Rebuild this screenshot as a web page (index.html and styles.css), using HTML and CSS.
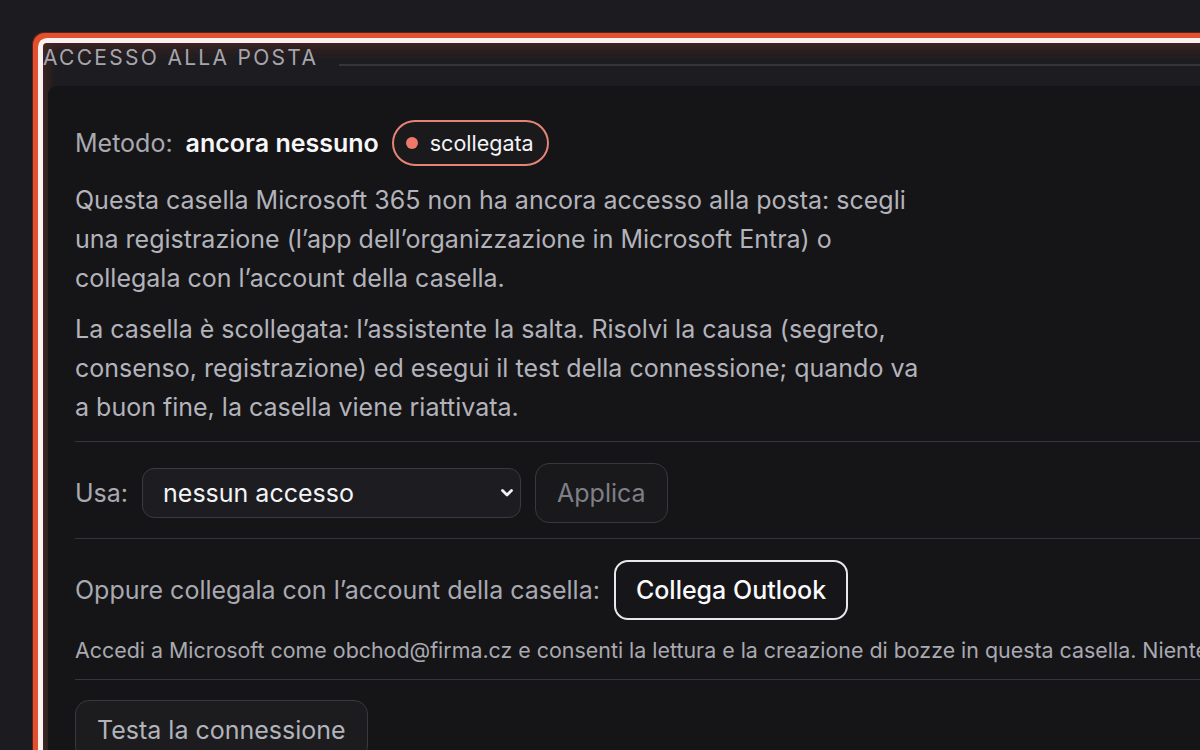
FILE: index.html
```html
<!DOCTYPE html>
<html lang="it">
<head>
	<meta charset="utf-8">
	<meta name="viewport" content="width=device-width, initial-scale=1">
	<title>Accesso alla posta</title>
	<link rel="stylesheet" href="styles.css">
</head>
<body>
	<div class="page">
		<section class="frame">
			<div class="frame-head"><span class="legend">Accesso alla posta</span></div>
			<div class="panel">
				<div class="method">
					<span class="muted">Metodo:</span>
					<strong>ancora nessuno</strong>
					<span class="badge"><i class="dot"></i>scollegata</span>
				</div>
				<p class="text">Questa casella Microsoft 365 non ha ancora accesso alla posta: scegli una registrazione (l’app dell’organizzazione in Microsoft Entra) o collegala con l’account della casella.</p>
				<p class="text">La casella è scollegata: l’assistente la salta. Risolvi la causa (segreto, consenso, registrazione) ed esegui il test della connessione; quando va a buon fine, la casella viene riattivata.</p>

				<div class="section">
					<div class="row">
						<label class="muted" for="use">Usa:</label>
						<span class="select-wrap">
							<select id="use" class="select">
								<option>nessun accesso</option>
								<option>registrazione dell’organizzazione</option>
							</select>
							<svg class="chevron" width="14" height="10" viewBox="0 0 14 10"><path d="M2.5 2.5l4.5 4.5 4.5-4.5" fill="none" stroke="#f2f2f4" stroke-width="2.8" stroke-linecap="round" stroke-linejoin="round"/></svg>
						</span>
						<button class="btn btn-disabled" disabled>Applica</button>
					</div>
				</div>

				<div class="section">
					<div class="row">
						<span class="muted">Oppure collegala con l’account della casella:</span>
						<button class="btn btn-primary">Collega Outlook</button>
					</div>
					<p class="note">Accedi a Microsoft come obchod@firma.cz e consenti la lettura e la creazione di bozze in questa casella. Niente viene inviato senza la tua conferma.</p>
				</div>

				<div class="section">
					<button class="btn btn-ghost">Testa la connessione</button>
				</div>
			</div>
		</section>
	</div>
</body>
</html>
```

FILE: styles.css
```css
html,body{margin:0;padding:0;}
body{background:#1c1c20;color:#f2f2f4;font-family:Inter,"Noto Sans",sans-serif;overflow:hidden;height:100vh;}

.page{padding:43px 0 0 43px;}

.frame{width:1500px;border-radius:4px;background:#1d1d21;box-shadow:0 0 0 5px #fbf1ef,0 0 0 10px #e2502f,0 0 0 11px #5a2418,inset 0 8px 14px rgb(226 80 47/.14),inset 6px 0 10px rgb(226 80 47/.12);}
.frame-head{display:flex;align-items:center;gap:21px;height:30px;}
.frame-head::after{content:"";flex:1;height:2px;background:#34343a;margin-top:13px;}
.legend{font-size:21px;letter-spacing:2.3px;text-transform:uppercase;color:#a6a6ae;line-height:30px;}

.panel{margin:13px 0 0 5px;background:#151517;border-radius:9px 0 0 0;padding:34px 27px 40px;font-size:25px;}

.muted{color:#a9a9b1;}
.method{display:flex;align-items:center;gap:13px;height:46px;}
.method strong{font-weight:600;color:#f7f7f9;}
.badge{display:inline-flex;align-items:center;gap:12px;height:46px;box-sizing:border-box;padding:0 13px 0 12px;border:2px solid #e58476;border-radius:23px;font-size:21.5px;color:#f4f4f6;background:#1a1a1d;}
.dot{width:12px;height:12px;border-radius:50%;background:#f0786a;}

.text{margin:15px 0 0;max-width:845px;line-height:39px;color:#b3b3bb;}
.text+.text{margin-top:12px;}

.section{margin-top:14px;border-top:1px solid #34343a;padding-top:20px;}
.row{display:flex;align-items:center;gap:14px;min-height:62px;}
.row+.note{margin-top:14px;}

.select-wrap{position:relative;display:inline-block;}
.select{appearance:none;-webkit-appearance:none;display:block;width:379px;height:50px;border-radius:12px;border:1px solid #3a3a40;background:#1d1d21;color:#f4f4f6;font:inherit;padding:0 40px 0 20px;outline:none;}
.chevron{position:absolute;right:7px;top:20px;pointer-events:none;}

.btn{font:inherit;height:60px;padding:0 21px;border-radius:14px;background:#19191c;cursor:pointer;}
.btn-disabled{border:1px solid #38383e;color:#7f7f87;cursor:default;}
.btn-primary{border:2px solid #e8e8ec;color:#fafafc;font-weight:500;padding:0 20px;background:#161618;}
.btn-ghost{border:1px solid #38383e;color:#b3b3bb;background:#1c1c1f;}

.note{margin:14px 0 0;font-size:21.4px;line-height:30px;color:#a9a9b1;white-space:nowrap;}
```
